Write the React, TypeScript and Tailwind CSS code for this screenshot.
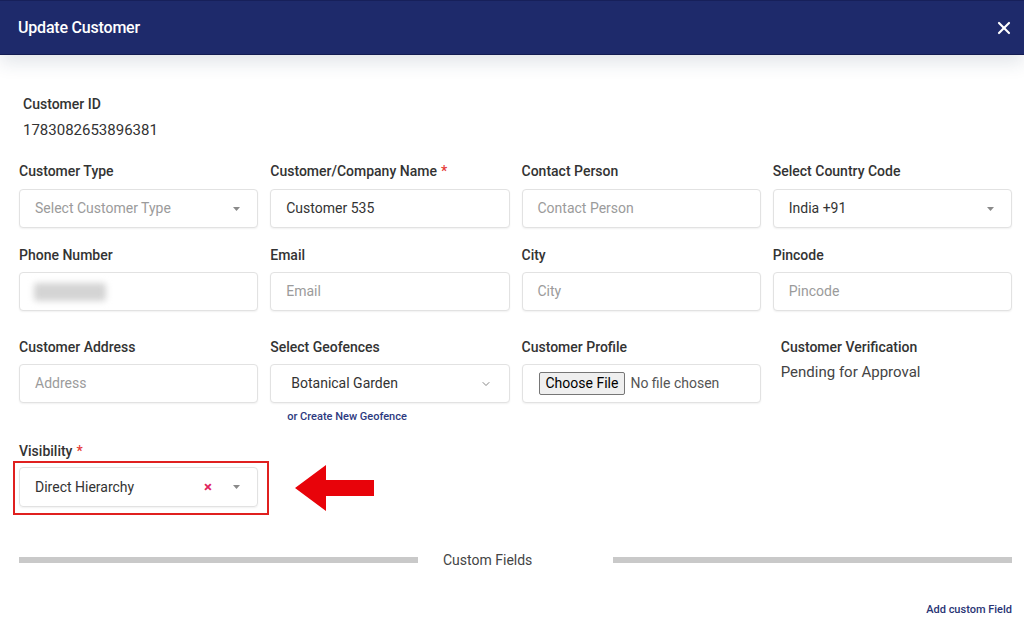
import { X, ChevronDown } from "lucide-react";

const font = { fontFamily: "Roboto, 'Liberation Sans', sans-serif" };

function Label({ text, required, className = "mb-[8px]" }: { text: string; required?: boolean; className?: string }) {
  return (
    <div className={`h-5 leading-5 text-[14px] font-medium text-[#333] ${className}`}>
      {text}
      {required && <span className="text-[#e53935] ml-1">*</span>}
    </div>
  );
}

function Caret() {
  return (
    <svg width="7" height="4" viewBox="0 0 7 4" className="shrink-0">
      <path d="M0 0h7L3.5 4z" fill="#8a8a8a" />
    </svg>
  );
}

function Box({ children, className = "" }: { children?: React.ReactNode; className?: string }) {
  return (
    <div
      className={`h-[39px] flex items-center pl-4 pr-[17px] border border-[#e2e2e2] rounded-[4px] bg-white shadow-[0_1px_2px_rgba(0,0,0,0.06)] text-[14px] ${className}`}
    >
      {children}
    </div>
  );
}

function TextField({ label, value, placeholder, required, gap = "mb-[8px]" }: { label: string; value?: string; placeholder?: string; required?: boolean; gap?: string }) {
  return (
    <div>
      <Label text={label} required={required} className={gap} />
      <Box className="pl-[15px]">
        {value ? <span className="text-[#333]">{value}</span> : <span className="text-[#9b9b9b]">{placeholder}</span>}
      </Box>
    </div>
  );
}

function SelectField({ label, value, placeholder }: { label: string; value?: string; placeholder?: string }) {
  return (
    <div>
      <Label text={label} />
      <Box className="justify-between pl-[15px]">
        {value ? <span className="text-[#333]">{value}</span> : <span className="text-[#9b9b9b]">{placeholder}</span>}
        <Caret />
      </Box>
    </div>
  );
}

export default function App() {
  return (
    <div className="w-full h-[624px] bg-white overflow-hidden" style={font}>
      <div className="relative z-10 h-[55px] bg-[#1e2a6b] border-t border-[#17205a] border-b border-b-[#141c52] flex items-center justify-between pl-[18px] pr-[10px] shadow-[0_8px_18px_rgba(40,60,90,0.13)]">
        <span className="text-white text-[16px] font-medium tracking-[-0.2px]">Update Customer</span>
        <X size={20} strokeWidth={2.6} className="text-white" />
      </div>

      <div className="pl-[19px] pr-[12px]">
        <div className="pt-[39px] pl-[4px]">
          <div className="h-5 leading-5 text-[14px] font-medium text-[#333]">Customer ID</div>
          <div className="mt-[6px] h-5 leading-5 text-[15px] text-[#333]">1783082653896381</div>
        </div>

        <div className="grid grid-cols-4 gap-x-[12px] mt-[21px]">
          <SelectField label="Customer Type" placeholder="Select Customer Type" />
          <TextField label="Customer/Company Name" value="Customer 535" required />
          <TextField label="Contact Person" placeholder="Contact Person" />
          <SelectField label="Select Country Code" value="India +91" />
        </div>

        <div className="grid grid-cols-4 gap-x-[12px] mt-[17px]">
          <div>
            <Label text="Phone Number" className="mb-[7px]" />
            <Box>
              <div className="w-[72px] h-[18px] rounded-[3px] bg-[#d4d4d4] blur-[3px] -ml-[2px]" />
            </Box>
          </div>
          <TextField label="Email" placeholder="Email" gap="mb-[7px]" />
          <TextField label="City" placeholder="City" gap="mb-[7px]" />
          <TextField label="Pincode" placeholder="Pincode" gap="mb-[7px]" />
        </div>

        <div className="grid grid-cols-4 gap-x-[12px] mt-[26px]">
          <TextField label="Customer Address" placeholder="Address" gap="mb-[7px]" />
          <div>
            <Label text="Select Geofences" className="mb-[7px]" />
            <Box className="justify-between pl-[20px] pr-[17px]">
              <span className="text-[#333]">Botanical Garden</span>
              <ChevronDown size={12} strokeWidth={1.6} className="text-[#666]" />
            </Box>
            <div className="mt-[7px] pl-[17px] h-[14px] leading-[14px] text-[11px] font-medium text-[#2d3a80]">
              or Create New Geofence
            </div>
          </div>
          <div>
            <Label text="Customer Profile" className="mb-[7px]" />
            <Box className="pl-[16px]">
              <span className="h-[23px] px-[6px] flex items-center border border-[#767676] rounded-[2px] bg-[#efefef] text-[14px] text-black">
                Choose File
              </span>
              <span className="ml-[5px] text-[#555]">No file chosen</span>
            </Box>
          </div>
          <div className="pl-[8px]">
            <Label text="Customer Verification" className="mb-[5px]" />
            <div className="text-[15px] leading-5 text-[#444]">Pending for Approval</div>
          </div>
        </div>

        <div className="mt-[17px]">
          <div className="h-5 leading-5 text-[14px] font-medium text-[#333]">
            Visibility<span className="text-[#e53935] ml-1">*</span>
          </div>
          <div className="flex items-center">
            <div className="-ml-[6px] w-[256px] h-[54px] border-2 border-[#e0201f] pl-[4px] pt-[4px]">
              <div className="w-[239px] h-[40px] flex items-center pl-[15px] pr-[17px] border border-[#e2e2e2] rounded-[4px] shadow-[0_1px_2px_rgba(0,0,0,0.06)] text-[14px]">
                <span className="text-[#333] flex-1">Direct Hierarchy</span>
                <span className="text-[#e0245e] text-[15px] font-bold mr-[21px] leading-none">×</span>
                <Caret />
              </div>
            </div>
            <svg width="80" height="48" viewBox="0 0 80 48" className="ml-[26px]">
              <path d="M0 24L31 1v15h48v16H31v15z" fill="#e8030a" />
            </svg>
          </div>
        </div>

        <div className="mt-[35px] h-5 flex items-center">
          <div className="w-[399px] h-[6px] bg-[#c9c9c9]" />
          <span className="ml-[25px] text-[14px] text-[#444]">Custom Fields</span>
          <div className="ml-auto w-[399px] h-[6px] bg-[#c9c9c9]" />
        </div>

        <div className="mt-[33px] h-[14px] leading-[14px] text-right text-[11px] font-medium text-[#2a3575]">
          Add custom Field
        </div>
      </div>
    </div>
  );
}
